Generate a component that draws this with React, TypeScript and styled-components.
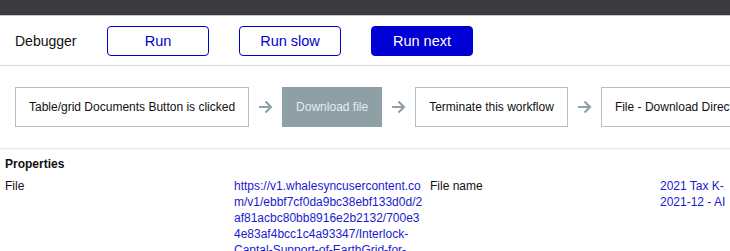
import React from "react";
import styled, { createGlobalStyle } from "styled-components";

const GlobalStyle = createGlobalStyle`
  body {
    margin: 0;
    font-family: "Liberation Sans", Arial, sans-serif;
    color: #111;
    background: #fff;
  }
`;

const TopBar = styled.div`
  height: 15px;
  background: #3a3b3f;
  border-bottom: 1px solid #c8c8c8;
`;

const Toolbar = styled.div`
  display: flex;
  align-items: center;
  height: 49px;
  padding-left: 15px;
  border-bottom: 1px solid #d6d6d6;
  font-size: 14px;
`;

const ToolbarTitle = styled.span`
  width: 92px;
`;

const Button = styled.button<{ $primary?: boolean }>`
  width: 102px;
  height: 30px;
  margin-right: 30px;
  border: 1px solid #0000cc;
  border-radius: 4px;
  background: ${(p) => (p.$primary ? "#0000d4" : "#fff")};
  color: ${(p) => (p.$primary ? "#fff" : "#0000cc")};
  font-family: inherit;
  font-size: 14.5px;
  cursor: pointer;
`;

const Flow = styled.div`
  display: flex;
  align-items: center;
  height: 82px;
  padding-left: 15px;
  border-bottom: 1px solid #e6e6e6;
  overflow: hidden;
  white-space: nowrap;
`;

const Step = styled.div<{ $active?: boolean }>`
  flex: none;
  display: flex;
  align-items: center;
  height: 40px;
  box-sizing: border-box;
  padding: 0 13px;
  border: 1px solid ${(p) => (p.$active ? "#8e9fa5" : "#b4c0c5")};
  background: ${(p) => (p.$active ? "#8e9fa5" : "#fff")};
  color: ${(p) => (p.$active ? "#e6ecee" : "#111")};
  font-size: 12px;
`;

const ArrowWrap = styled.div`
  flex: none;
  display: flex;
  margin: 0 9px;
`;

const Arrow = () => (
  <ArrowWrap>
    <svg width="15" height="14" viewBox="0 0 15 14" fill="none">
      <path d="M1 7h12M7.5 1.5L13 7l-5.5 5.5" stroke="#90a2a9" strokeWidth="2.2" />
    </svg>
  </ArrowWrap>
);

const Properties = styled.div`
  padding: 7px 5px 0;
  font-size: 12px;
  line-height: 16px;
`;

const Heading = styled.div`
  font-weight: bold;
  margin-bottom: 6px;
`;

const Grid = styled.div`
  display: grid;
  grid-template-columns: 229px 196px 230px 1fr;
  white-space: nowrap;
`;

const Label = styled.div``;

const Value = styled.div<{ $wrap?: boolean }>`
  color: #1a1ad2;
  padding-right: ${(p) => (p.$wrap ? "5px" : "0")};
  white-space: ${(p) => (p.$wrap ? "normal" : "nowrap")};
  overflow-wrap: ${(p) => (p.$wrap ? "anywhere" : "normal")};
  overflow: hidden;
`;

const url =
  "https://v1.whalesyncusercontent.com/v1/ebbf7cf0da9bc38ebf133d0d/2af81acbc80bb8916e2b2132/700e34e83af4bcc1c4a93347/Interlock-Captal-Support-of-EarthGrid-for-";

export default function App() {
  return (
    <>
      <GlobalStyle />
      <TopBar />
      <Toolbar>
        <ToolbarTitle>Debugger</ToolbarTitle>
        <Button>Run</Button>
        <Button>Run slow</Button>
        <Button $primary>Run next</Button>
      </Toolbar>
      <Flow>
        <Step>Table/grid Documents Button is clicked</Step>
        <Arrow />
        <Step $active>Download file</Step>
        <Arrow />
        <Step>Terminate this workflow</Step>
        <Arrow />
        <Step>File - Download Direct Link</Step>
      </Flow>
      <Properties>
        <Heading>Properties</Heading>
        <Grid>
          <Label>File</Label>
          <Value $wrap>{url}</Value>
          <Label>File name</Label>
          <Value>
            2021 Tax K-1 Document
            <br />
            2021-12 - AI Document
          </Value>
        </Grid>
      </Properties>
    </>
  );
}
